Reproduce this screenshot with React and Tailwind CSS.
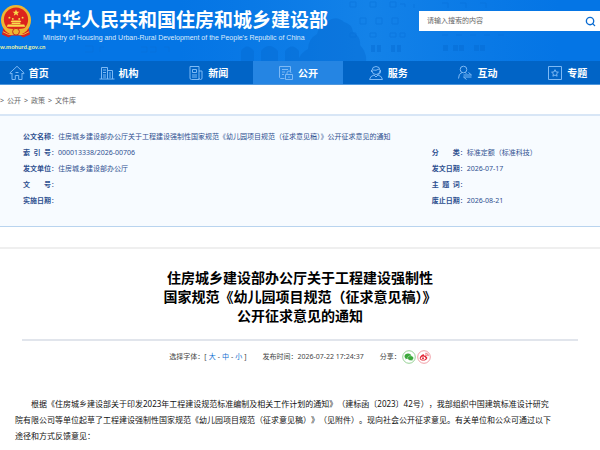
import { Search } from 'lucide-react'

const navItems = [
  { name: '首页', icon: HomeIcon },
  { name: '机构', icon: OrgIcon },
  { name: '新闻', icon: NewsIcon },
  { name: '公开', icon: OpenIcon, active: true },
  { name: '服务', icon: ServiceIcon },
  { name: '互动', icon: InteractIcon },
  { name: '专题', icon: TopicIcon },
]

const crumbs = ['公开', '政策', '文件库']

const leftInfo = [
  { label: '索\u2002引\u2002号', value: '000013338/2026-00706' },
  { label: '发文单位', value: '住房城乡建设部办公厅' },
  { label: '文\u3000\u3000号', value: '' },
  { label: '实施日期', value: '' },
]

const rightInfo = [
  { label: '分\u3000\u3000类', value: '标准定额（标准科技）' },
  { label: '发文日期', value: '2026-07-17' },
  { label: '主\u2002题\u2002词', value: '' },
  { label: '废止日期', value: '2026-08-21' },
]

export default function App() {
  return (
    <div className="min-h-screen overflow-hidden bg-white font-['Noto_Sans','Noto_Sans_CJK_SC',sans-serif]">
      <Header />
      <Nav />
      <nav className="flex gap-[3px] pt-3 text-[7px] leading-2 text-[#666]">
        {crumbs.map((c) => (
          <span key={c} className="flex gap-[3px]">
            <span>&gt;</span>
            <a href="#" className="hover:underline">{c}</a>
          </span>
        ))}
      </nav>
      <DocInfo />
      <Article />
    </div>
  )
}

function Header() {
  return (
    <header className="relative flex h-[61px] items-start justify-between bg-[#0475e5]">
      <Backdrop />
      <div className="relative flex">
        <div className="flex w-[43px] flex-col items-start pt-1">
          <Emblem />
          <span className="mt-[3px] font-[Lato,'Liberation_Sans',sans-serif] text-[6px] leading-2 font-bold whitespace-nowrap text-[#e9f3a4]">w.mohurd.gov.cn</span>
        </div>
        <div className="pt-2">
          <h1 className="text-[19px] leading-6 font-bold whitespace-nowrap text-white">中华人民共和国住房和城乡建设部</h1>
          <p className="font-['Liberation_Sans',sans-serif] text-[7px] leading-3 whitespace-nowrap text-[#dcebfc]">
            Ministry of Housing and Urban-Rural Development of the People's Republic of China
          </p>
        </div>
      </div>
      <form className="relative mt-[11px] flex h-5 w-[181px] items-center bg-white pr-1 pl-2" onSubmit={(e) => e.preventDefault()}>
        <input type="text" aria-label="搜索" placeholder="请输入搜索的内容" className="min-w-0 flex-1 text-[7px] text-[#444] outline-none placeholder:text-[#666]" />
        <button type="submit" aria-label="搜索">
          <Search className="size-[11px] text-[#0a6cd2]" strokeWidth={3} />
        </button>
      </form>
    </header>
  )
}

function Nav() {
  return (
    <nav className="border-b border-[#4f97dd] bg-[#0164c6]">
      <ul className="-mr-3 -ml-4 flex">
        {navItems.map(({ name, icon: Icon, active }) => (
          <li key={name} className="flex-1">
            <a href="#" className={active ? 'flex h-[23px] items-center justify-center gap-1 bg-[#2585e3]' : 'flex h-[23px] items-center justify-center gap-1 hover:bg-[#2585e3]'}>
              <Icon />
              <span className="text-[10px] leading-4 font-bold text-white">{name}</span>
            </a>
          </li>
        ))}
      </ul>
    </nav>
  )
}

function InfoRow({ label, value }) {
  return (
    <div className="flex">
      <dt className="shrink-0 whitespace-pre"><b>{label}</b>：</dt>
      <dd>{value}</dd>
    </div>
  )
}

function DocInfo() {
  return (
    <section className="mt-[9px] border-t-2 border-b border-t-[#d8e6f6] border-b-[#b9d4ef] bg-[#f7fbff] pt-[13px] pb-[17px] pl-[23px] text-[7px] leading-4 text-[#2d4f8f]">
      <dl>
        <InfoRow label="公文名称" value="住房城乡建设部办公厅关于工程建设强制性国家规范《幼儿园项目规范（征求意见稿）》公开征求意见的通知" />
      </dl>
      <div className="grid grid-cols-[17fr_7fr]">
        <dl>
          {leftInfo.map((r) => <InfoRow key={r.label} {...r} />)}
        </dl>
        <dl>
          {rightInfo.map((r) => <InfoRow key={r.label} {...r} />)}
        </dl>
      </div>
    </section>
  )
}

function Article() {
  return (
    <article className="mt-5 border-t-2 border-[#efefef] pt-[19px]">
      <h2 className="text-center text-[14px] leading-[19px] font-bold text-black">
        住房城乡建设部办公厅关于工程建设强制性<br />
        国家规范《幼儿园项目规范（征求意见稿）》<br />
        公开征求意见的通知
      </h2>
      <div className="mx-[22px] mt-[14px] flex items-center justify-center gap-4 border-t-2 border-[#e1e5ec] pt-2 text-[7px] leading-4 text-[#444]">
        <span className="flex gap-0.5">
          选择字体：[
          <button className="text-[#1071d2]">大</button> -
          <button className="text-[#1071d2]">中</button> -
          <button className="text-[#1071d2]">小</button> ]
        </span>
        <span>发布时间：2026-07-22 17:24:37</span>
        <span className="flex items-center gap-px">
          分享：
          <a href="#" aria-label="微信"><WechatIcon /></a>
          <a href="#" aria-label="微博"><WeiboIcon /></a>
        </span>
      </div>
      <p className="mt-[31px] pl-[15px] indent-4 text-[8px] leading-4 whitespace-nowrap text-[#111] [text-spacing-trim:space-all]">
        根据《住房城乡建设部关于印发2023年工程建设规范标准编制及相关工作计划的通知》（建标函〔2023〕42号），我部组织中国建筑标准设计研究<br />
        院有限公司等单位起草了工程建设强制性国家规范《幼儿园项目规范（征求意见稿）》（见附件）。现向社会公开征求意见。有关单位和公众可通过以下<br />
        途径和方式反馈意见：
      </p>
    </article>
  )
}

// Faint ministry building and trees behind the banner
function Backdrop() {
  return (
    <svg className="absolute inset-0 size-full" viewBox="0 0 600 61" preserveAspectRatio="none" aria-hidden="true">
      <defs>
        <linearGradient id="glow">
          <stop offset="0" stopColor="#1682e8" stopOpacity="0" />
          <stop offset=".5" stopColor="#1a88ea" stopOpacity=".7" />
          <stop offset="1" stopColor="#1682e8" stopOpacity="0" />
        </linearGradient>
      </defs>
      <rect x="180" width="380" height="61" fill="url(#glow)" />
      <g fill="#056bd3" opacity=".45">
        <path d="M241 61V51q6-9 13 0v10zM261 61V51q8-10 17 0v10zM285 61V51q7-9 14 0v10z" />
        <path d="M298 61q2-8 10-12 0-10 9-15 2-9 11-13 8-6 16 1 8 2 9 10 8 5 7 13 7 8 6 16z" />
        <path d="M371 45h4v7h-4zM377 45h4v7h-4zM391 45h4v7h-4zM397 45h4v7h-4zM443 45h5v6h-5zM453 45h5v6h-5zM459 45h5v6h-5zM474 45h5v6h-5zM480 45h5v6h-5z" />
      </g>
      <g fill="none" stroke="#0871d9" strokeWidth="1" opacity=".5">
        <path d="M350 2h6v5h-6zM370 2h6v5h-6zM390 2h6v5h-6zM360 18h6v6h-6zM376 18h6v6h-6zM392 18h6v6h-6zM350 33h6v4h-6zM370 33h6v4h-6zM390 33h6v4h-6zM400 33h5v4h-5z" />
        <path d="M442 35h6M456 35h6M470 35h6M484 35h6M498 35h6M400 4h5v3M414 4v4M442 3h6v5M460 3h6v5M480 3h6v5" />
        <path d="M85 46h8v6h-8M100 52v-5h4M141 47h6v5h-6M150 47h6v5h-6M164 47h5v5" />
      </g>
    </svg>
  )
}

function Emblem() {
  return (
    <svg className="h-9 w-8" viewBox="0 0 33 36" aria-hidden="true">
      <path d="M4 22 2 31l7 3 3-2h9l3 2 7-3-2-9z" fill="#d92420" />
      <circle cx="16.5" cy="16" r="15.5" fill="#edb632" />
      <circle cx="16.5" cy="15.5" r="12.5" fill="#dc241d" />
      <path d="m16.5 5 1 2.4h2.6L18 9l.8 2.5-2.3-1.5-2.3 1.5L15 9l-2.1-1.6h2.6z" fill="#f9dc4d" />
      <g fill="#f9dc4d">
        <circle cx="9.7" cy="13.5" r="1" />
        <circle cx="23.3" cy="13.5" r="1" />
        <circle cx="13.2" cy="14.8" r="1" />
        <circle cx="19.8" cy="14.8" r="1" />
        <path d="m11 18 1-1.5h9l1 1.5zM12 18.5h9V20h-9zM8 20.5h17l1 2.5H7z" />
      </g>
      <path d="M5 24q11.5 3 23 0l-1 3q-10.5 4-21 0z" fill="#edb632" />
      <circle cx="16.5" cy="28" r="3.5" fill="#edb632" stroke="#c9251c" />
      <path d="M3 28q6 4 10 3M30 28q-6 4-10 3" fill="none" stroke="#f0b93a" strokeWidth="1" />
    </svg>
  )
}

function NavSvg({ children }) {
  return (
    <svg className="size-4 shrink-0" viewBox="0 0 16 16" fill="none" stroke="#7db9f5" strokeWidth="1" aria-hidden="true">
      {children}
    </svg>
  )
}

function HomeIcon() {
  return (
    <NavSvg>
      <path d="M.8 8 8 1.3 15.2 8l-1 1-1.2-1v6.500H9.700v-4H6.300v4H3V8L1.800 9z" />
      <path d="M6.500 7.500h3" />
    </NavSvg>
  )
}

function OrgIcon() {
  return (
    <NavSvg>
      <path d="M2.500 14V2.500h6V14M8.500 5.500h5V14M.5 14h15M4 5h3M4 7.500h3M4 10h3M4 12h3M10 8h2M10 10h2M10 12h2" />
    </NavSvg>
  )
}

function NewsIcon() {
  return (
    <NavSvg>
      <path d="M2 1.500h9v13H3.500A1.500 1.500 0 0 1 2 13zM11 6h3v7a1.500 1.500 0 0 1-3 0M4.500 4.500h4v3h-4zM4 10h5M4 12h5" />
    </NavSvg>
  )
}

function OpenIcon() {
  return (
    <NavSvg>
      <path d="M6.500 13.500h-4l-1-1v-11h11v5M4 4.500h6M4 7h3M4 9.500h2" />
      <path d="M7.500 9.500h7v5h-7zM9 9.500V8a2 2 0 0 1 4 0M11 11.500v1.500" />
    </NavSvg>
  )
}

function ServiceIcon() {
  return (
    <NavSvg>
      <circle cx="8" cy="5.500" r="4" />
      <path d="M5 5q3 1 6-1M3.500 5v2M12.500 5v2q0 2-3 2.500M1.500 14.500q.5-3.500 4.500-4.500l2 2 2-2q4 1 4.500 4.500z" />
    </NavSvg>
  )
}

function InteractIcon() {
  return (
    <NavSvg>
      <circle cx="6.500" cy="4.500" r="3.300" />
      <path d="M1.500 13.500q0-5 3.500-6M8 7.500l1.500 1" />
      <path d="M6.500 10h8l-3-2.500M14.500 12h-8l3 2.500" />
    </NavSvg>
  )
}

function TopicIcon() {
  return (
    <NavSvg>
      <path d="M1.500 1.500h13v13h-13z" />
      <path d="m8 4.700 1 2.200 2.400.3-1.800 1.600.5 2.400L8 10l-2.100 1.200.5-2.400-1.800-1.600 2.400-.3z" />
    </NavSvg>
  )
}

function WechatIcon() {
  return (
    <svg className="size-[14px]" viewBox="0 0 14 14" aria-hidden="true">
      <circle cx="7" cy="7" r="6.300" fill="#fff" stroke="#7cc67b" strokeWidth=".8" />
      <path d="M6 3.500c-2 0-3.500 1.200-3.500 2.800 0 .9.500 1.600 1.200 2.100l-.3 1.100 1.300-.7 1.300.2c2 0 3.400-1.200 3.400-2.700S8 3.500 6 3.500z" fill="#3aa93a" />
      <path d="M8.600 5.800c-1.700 0-3 1-3 2.300s1.300 2.400 3 2.400l1-.1 1.100.6-.3-1c.7-.4 1.200-1.100 1.200-1.900 0-1.300-1.300-2.300-3-2.300z" fill="#3aa93a" stroke="#fff" strokeWidth=".4" />
    </svg>
  )
}

function WeiboIcon() {
  return (
    <svg className="size-[14px]" viewBox="0 0 14 14" aria-hidden="true">
      <circle cx="7" cy="7" r="6.300" fill="#fff" stroke="#ee8790" strokeWidth=".8" />
      <path d="M6.300 4.200c-1.600.4-3.600 2.400-3.600 4 0 1.500 1.700 2.400 3.600 2.400 2.300 0 4-1.300 4-2.700 0-.8-.6-1.200-1.200-1.400.3-.9-.7-1.300-2-.7.200-.8 0-1.700-.8-1.600z" fill="#e32535" />
      <ellipse cx="6.200" cy="8.200" rx="2.300" ry="1.600" fill="#fff" />
      <circle cx="6" cy="8.300" r="1" fill="#e32535" />
      <path d="M8.300 3.300c2-.3 3.300 1.100 2.800 2.900M8.500 4.700c.9-.2 1.500.4 1.300 1.200" fill="none" stroke="#e32535" strokeWidth=".7" />
    </svg>
  )
}
